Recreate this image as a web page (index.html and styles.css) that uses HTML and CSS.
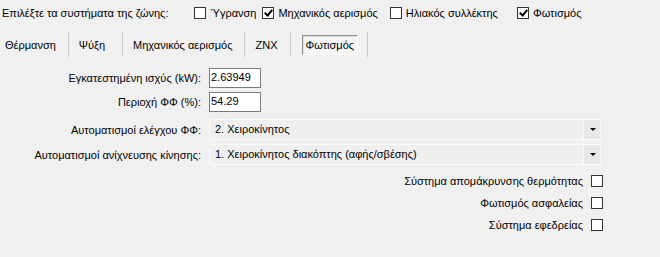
FILE: index.html
```html
<!DOCTYPE html>
<html lang="el">
<head>
    <meta charset="UTF-8">
    <title>Φωτισμός</title>
    <link rel="stylesheet" href="styles.css">
</head>
<body>
    <div class="systems">
        <span class="systems-label">Επιλέξτε τα συστήματα της ζώνης:</span>
        <label class="check"><span class="box"></span>Ύγρανση</label>
        <label class="check"><span class="box checked"></span>Μηχανικός αερισμός</label>
        <label class="check"><span class="box"></span>Ηλιακός συλλέκτης</label>
        <label class="check"><span class="box checked"></span>Φωτισμός</label>
    </div>

    <div class="tabs">
        <span class="tab tab-heat">Θέρμανση</span>
        <span class="tab tab-cool">Ψύξη</span>
        <span class="tab tab-vent">Μηχανικός αερισμός</span>
        <span class="tab tab-znx">ZNX</span>
        <span class="tab tab-light"><span class="tab-box">Φωτισμός</span></span>
    </div>

    <div class="form">
        <span class="label">Εγκατεστημένη ισχύς (kW):</span>
        <span class="field"><span class="input">2.63949</span></span>

        <span class="label">Περιοχή ΦΦ (%):</span>
        <span class="field"><span class="input">54.29</span></span>

        <span class="label gap">Αυτοματισμοί ελέγχου ΦΦ:</span>
        <span class="field gap">
            <span class="combo">
                <span class="combo-text">2. Χειροκίνητος</span>
                <span class="combo-btn"></span>
            </span>
        </span>

        <span class="label">Αυτοματισμοί ανίχνευσης κίνησης:</span>
        <span class="field">
            <span class="combo">
                <span class="combo-text">1. Χειροκίνητος διακόπτης (αφής/σβέσης)</span>
                <span class="combo-btn"></span>
            </span>
        </span>
    </div>

    <div class="options">
        <label class="option">Σύστημα απομάκρυνσης θερμότητας<span class="box"></span></label>
        <label class="option">Φωτισμός ασφαλείας<span class="box"></span></label>
        <label class="option">Σύστημα εφεδρείας<span class="box"></span></label>
    </div>
</body>
</html>
```
FILE: styles.css
```css
body {
    margin: 0;
    width: 660px;
    height: 257px;
    background: #f0f0f0;
    font-family: 'Liberation Sans', Arial, sans-serif;
    font-size: 11px;
    color: #000;
    overflow: hidden;
}

/* top row of system checkboxes */
.systems {
    display: flex;
    align-items: center;
    height: 14px;
    padding: 6px 0 0 2px;
}

.systems-label {
    margin-right: 26px;
}

.check {
    display: flex;
    align-items: center;
    margin-right: 6px;
}

.check:nth-child(3) {
    margin-right: 12px;
}

.check:nth-child(4) {
    margin-right: 19px;
}

.box {
    display: inline-block;
    position: relative;
    width: 12px;
    height: 12px;
    border: 1px solid #333;
    background: #fff;
    box-sizing: border-box;
    margin-right: 4px;
}

.box.checked::after {
    content: '';
    position: absolute;
    left: 3px;
    top: 0;
    width: 3px;
    height: 6px;
    border: solid #000;
    border-width: 0 2px 2px 0;
    transform: rotate(40deg);
}

/* tab strip */
.tabs {
    display: flex;
    align-items: center;
    height: 25px;
    margin-top: 12px;
    padding-left: 5px;
}

.tab {
    position: relative;
    height: 25px;
    line-height: 26px;
    margin-right: 10px;
}

.tab::after {
    content: '';
    position: absolute;
    right: 0;
    top: 0;
    height: 25px;
    border-left: 1px solid #c8c8c8;
}

.tab-heat { padding-right: 13px; }
.tab-cool { padding-right: 18px; }
.tab-vent { padding-right: 12px; margin-right: 11px; }
.tab-znx { padding-right: 13px; margin-right: 11px; }
.tab-light { padding-right: 10px; }

.tab-box {
    display: block;
    margin-top: 3px;
    height: 20px;
    line-height: 19px;
    padding: 0 3px;
    box-sizing: border-box;
    border: 1px solid #8f8f8f;
    border-right-color: #fff;
    border-bottom-color: #fff;
    box-shadow: inset 1px 1px 0 #e0e0e0;
    background: #f4f4f4;
}

/* labelled fields */
.form {
    display: grid;
    grid-template-columns: 201px 392px;
    column-gap: 8px;
    row-gap: 4px;
    margin-top: 11px;
    align-items: center;
}

.label {
    text-align: right;
    white-space: nowrap;
}

.gap {
    margin-top: 3px;
}

.input {
    display: block;
    width: 52px;
    height: 20px;
    box-sizing: border-box;
    border: 1px solid #7a7a7a;
    background: #fff;
    padding: 2px 1px 0;
}

.combo {
    display: flex;
    height: 21px;
    box-sizing: border-box;
    border: 1px solid #fbfbfb;
    background: #efefef;
}

.combo-text {
    flex: 1;
    padding: 3px 0 0 5px;
}

.combo-btn {
    position: relative;
    width: 16px;
    border-left: 1px solid #fbfbfb;
    background: #e8e8e8;
}

.combo-btn::after {
    content: '';
    position: absolute;
    left: 6px;
    top: 8px;
    border-left: 3px solid transparent;
    border-right: 3px solid transparent;
    border-top: 3px solid #000;
}

/* bottom checkboxes */
.options {
    display: flex;
    flex-direction: column;
    align-items: flex-end;
    gap: 9px;
    margin-top: 9px;
    width: 603px;
}

.option {
    display: flex;
    align-items: center;
    height: 13px;
}

.option .box {
    margin: 0 0 0 8px;
}
```
